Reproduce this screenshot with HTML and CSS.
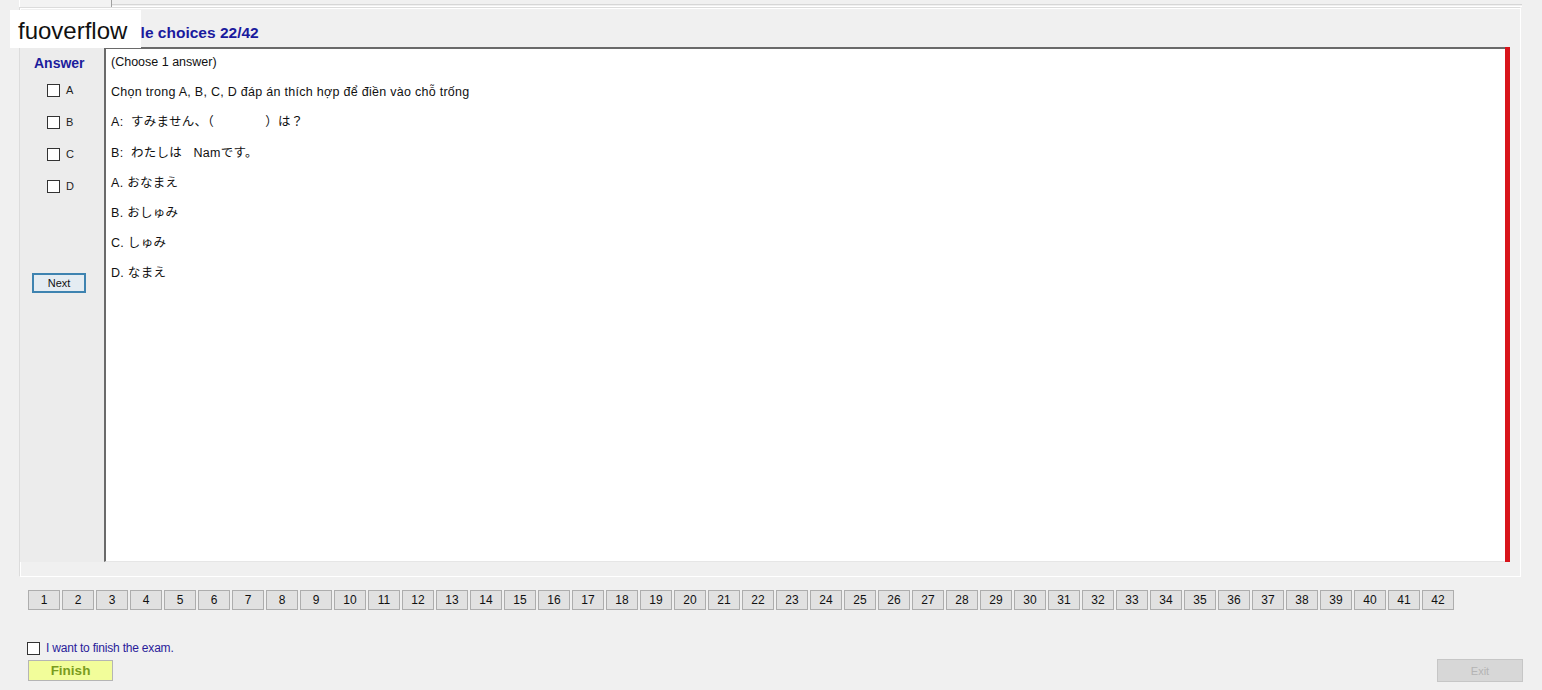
FILE: index.html
```html
<!DOCTYPE html>
<html lang="vi">
<head>
<meta charset="utf-8">
<title>Exam</title>
<link rel="stylesheet" href="styles.css">
</head>
<body>
<div class="page">
  <div class="tabstrip">
    <div class="tab"></div>
    <div class="tabline"></div>
  </div>
  <div class="group">
    <div class="title">Multiple choices 22/42</div>
    <div class="main">
      <div class="answers">
        <div class="answer-head">Answer</div>
        <label class="opt"><span class="box"></span><span>A</span></label>
        <label class="opt"><span class="box"></span><span>B</span></label>
        <label class="opt"><span class="box"></span><span>C</span></label>
        <label class="opt"><span class="box"></span><span>D</span></label>
        <button class="next">Next</button>
      </div>
      <div class="question">
        <p>(Choose 1 answer)</p>
        <p class="vi">Chọn trong A, B, C, D đáp án thích hợp để điền vào chỗ trống</p>
        <p class="ja">A:&nbsp; すみません、（　　　　）は？</p>
        <p class="ja">B:&nbsp; わたしは&nbsp;&nbsp; Namです。</p>
        <p class="ja">A. おなまえ</p>
        <p class="ja">B. おしゅみ</p>
        <p class="ja">C. しゅみ</p>
        <p class="ja">D. なまえ</p>
      </div>
      <div class="redbar"></div>
    </div>
  </div>
  <div class="pager">
    <button>1</button><button>2</button><button>3</button><button>4</button><button>5</button><button>6</button><button>7</button><button>8</button><button>9</button><button>10</button><button>11</button><button>12</button><button>13</button><button>14</button><button>15</button><button>16</button><button>17</button><button>18</button><button>19</button><button>20</button><button>21</button><button>22</button><button>23</button><button>24</button><button>25</button><button>26</button><button>27</button><button>28</button><button>29</button><button>30</button><button>31</button><button>32</button><button>33</button><button>34</button><button>35</button><button>36</button><button>37</button><button>38</button><button>39</button><button>40</button><button>41</button><button>42</button>
  </div>
  <label class="finish-check"><span class="box"></span><span>I want to finish the exam.</span></label>
  <div class="bottom">
    <button class="finish">Finish</button>
    <button class="exit">Exit</button>
  </div>
</div>
<div class="watermark">fuoverflow</div>
</body>
</html>
```

FILE: styles.css
```css
html, body {
  margin: 0;
  padding: 0;
}
body {
  background: #f0f0f0;
  font-family: "Liberation Sans", Arial, sans-serif;
  font-size: 12px;
  color: #000;
  width: 1542px;
  height: 690px;
  overflow: hidden;
  position: relative;
}
.page {
  display: flex;
  flex-direction: column;
}
.tabstrip {
  display: flex;
  height: 7px;
}
.tab {
  margin-left: 19px;
  width: 91px;
  border-left: 1px solid #ffffff;
  border-right: 1px solid #a0a0a0;
  background: #f3f3f3;
}
.tabline {
  flex: 1;
  margin-top: 4px;
  border-top: 1px solid #d6d6d6;
  border-bottom: 1px solid #ffffff;
  margin-right: 20px;
}
.group {
  margin-left: 19px;
  width: 1500px;
  height: 568px;
  border: 1px solid #dcdcdc;
  border-right-color: #ffffff;
  border-bottom-color: #ffffff;
  box-shadow: inset 1px 1px 0 #ffffff;
  display: flex;
  flex-direction: column;
  background: #f0f0f0;
}
.title {
  height: 39px;
  padding-left: 75px;
  box-sizing: border-box;
  padding-top: 16px;
  font-weight: bold;
  font-size: 15.5px;
  color: #1a1a9e;
}
.main {
  display: flex;
  height: 515px;
}
.answers {
  width: 84px;
  display: flex;
  flex-direction: column;
  align-items: flex-start;
  background: #ececec;
}
.answer-head {
  margin-left: 14px;
  margin-top: 8px;
  font-weight: bold;
  font-size: 14px;
  color: #1c1c9c;
  height: 17px;
}
.opt {
  display: flex;
  align-items: center;
  margin-left: 27px;
  height: 32px;
  font-size: 11px;
  color: #222;
}
.answer-head + .opt {
  margin-top: 2px;
}
.box {
  width: 11px;
  height: 11px;
  border: 1px solid #333;
  background: #fff;
  margin-right: 6px;
  display: inline-block;
}
.next {
  margin-left: 12px;
  margin-top: 71px;
  width: 54px;
  height: 20px;
  border: 2px solid #3e83b0;
  background: #e4ecf2;
  font-family: "Liberation Sans", Arial, sans-serif;
  font-size: 11px;
  padding: 0;
  color: #111;
}
.question {
  flex: 1;
  background: #ffffff;
  border-left: 2px solid #6a6a6a;
  border-top: 2px solid #6a6a6a;
  border-bottom: 1px solid #e6e6e6;
  padding-left: 5px;
  font-family: "Liberation Sans", Arial, "Noto Sans CJK JP", sans-serif;
  font-size: 12.5px;
  color: #111;
}
.question p {
  margin: 0;
  line-height: 30.2px;
  margin-top: -2px;
}
.question p + p {
  margin-top: 0;
}
.question .vi {
  letter-spacing: 0.28px;
}
.question .ja {
  letter-spacing: 0.3px;
}
.redbar {
  width: 5px;
  background: #d8141b;
  margin-right: 10px;
}
.pager {
  display: flex;
  gap: 2px;
  margin-left: 28px;
  margin-top: 13px;
}
.pager button {
  width: 32px;
  height: 20px;
  padding: 0;
  background: #e1e1e1;
  border: 1px solid #adadad;
  font-family: "Liberation Sans", Arial, sans-serif;
  font-size: 12px;
  color: #111;
}
.finish-check {
  display: flex;
  align-items: center;
  margin-left: 27px;
  margin-top: 31px;
  height: 14px;
  font-size: 12px;
  color: #2a1c9a;
  letter-spacing: -0.2px;
}
.finish-check .box {
  margin-right: 6px;
}
.bottom {
  display: flex;
  justify-content: space-between;
  align-items: flex-start;
  margin-top: 4px;
  margin-left: 28px;
  margin-right: 19px;
}
.finish {
  width: 85px;
  height: 21px;
  margin-top: 1px;
  padding: 0;
  background: #f2fd9a;
  border: 1px solid #b5b5b5;
  color: #7a9c1e;
  font-family: "Liberation Sans", Arial, sans-serif;
  font-weight: bold;
  font-size: 13.5px;
}
.exit {
  width: 86px;
  height: 23px;
  padding: 0;
  background: #d7d7d7;
  border: 1px solid #c6c6c6;
  color: #b4b4b4;
  font-family: "Liberation Sans", Arial, sans-serif;
  font-size: 11px;
}
.watermark {
  position: absolute;
  left: 10px;
  top: 10px;
  width: 131px;
  height: 38px;
  box-sizing: border-box;
  padding-left: 8px;
  padding-top: 3px;
  background: #ffffff;
  font-family: "Liberation Sans", Arial, sans-serif;
  font-size: 24px;
  color: #111;
  display: flex;
  align-items: center;
}
```
